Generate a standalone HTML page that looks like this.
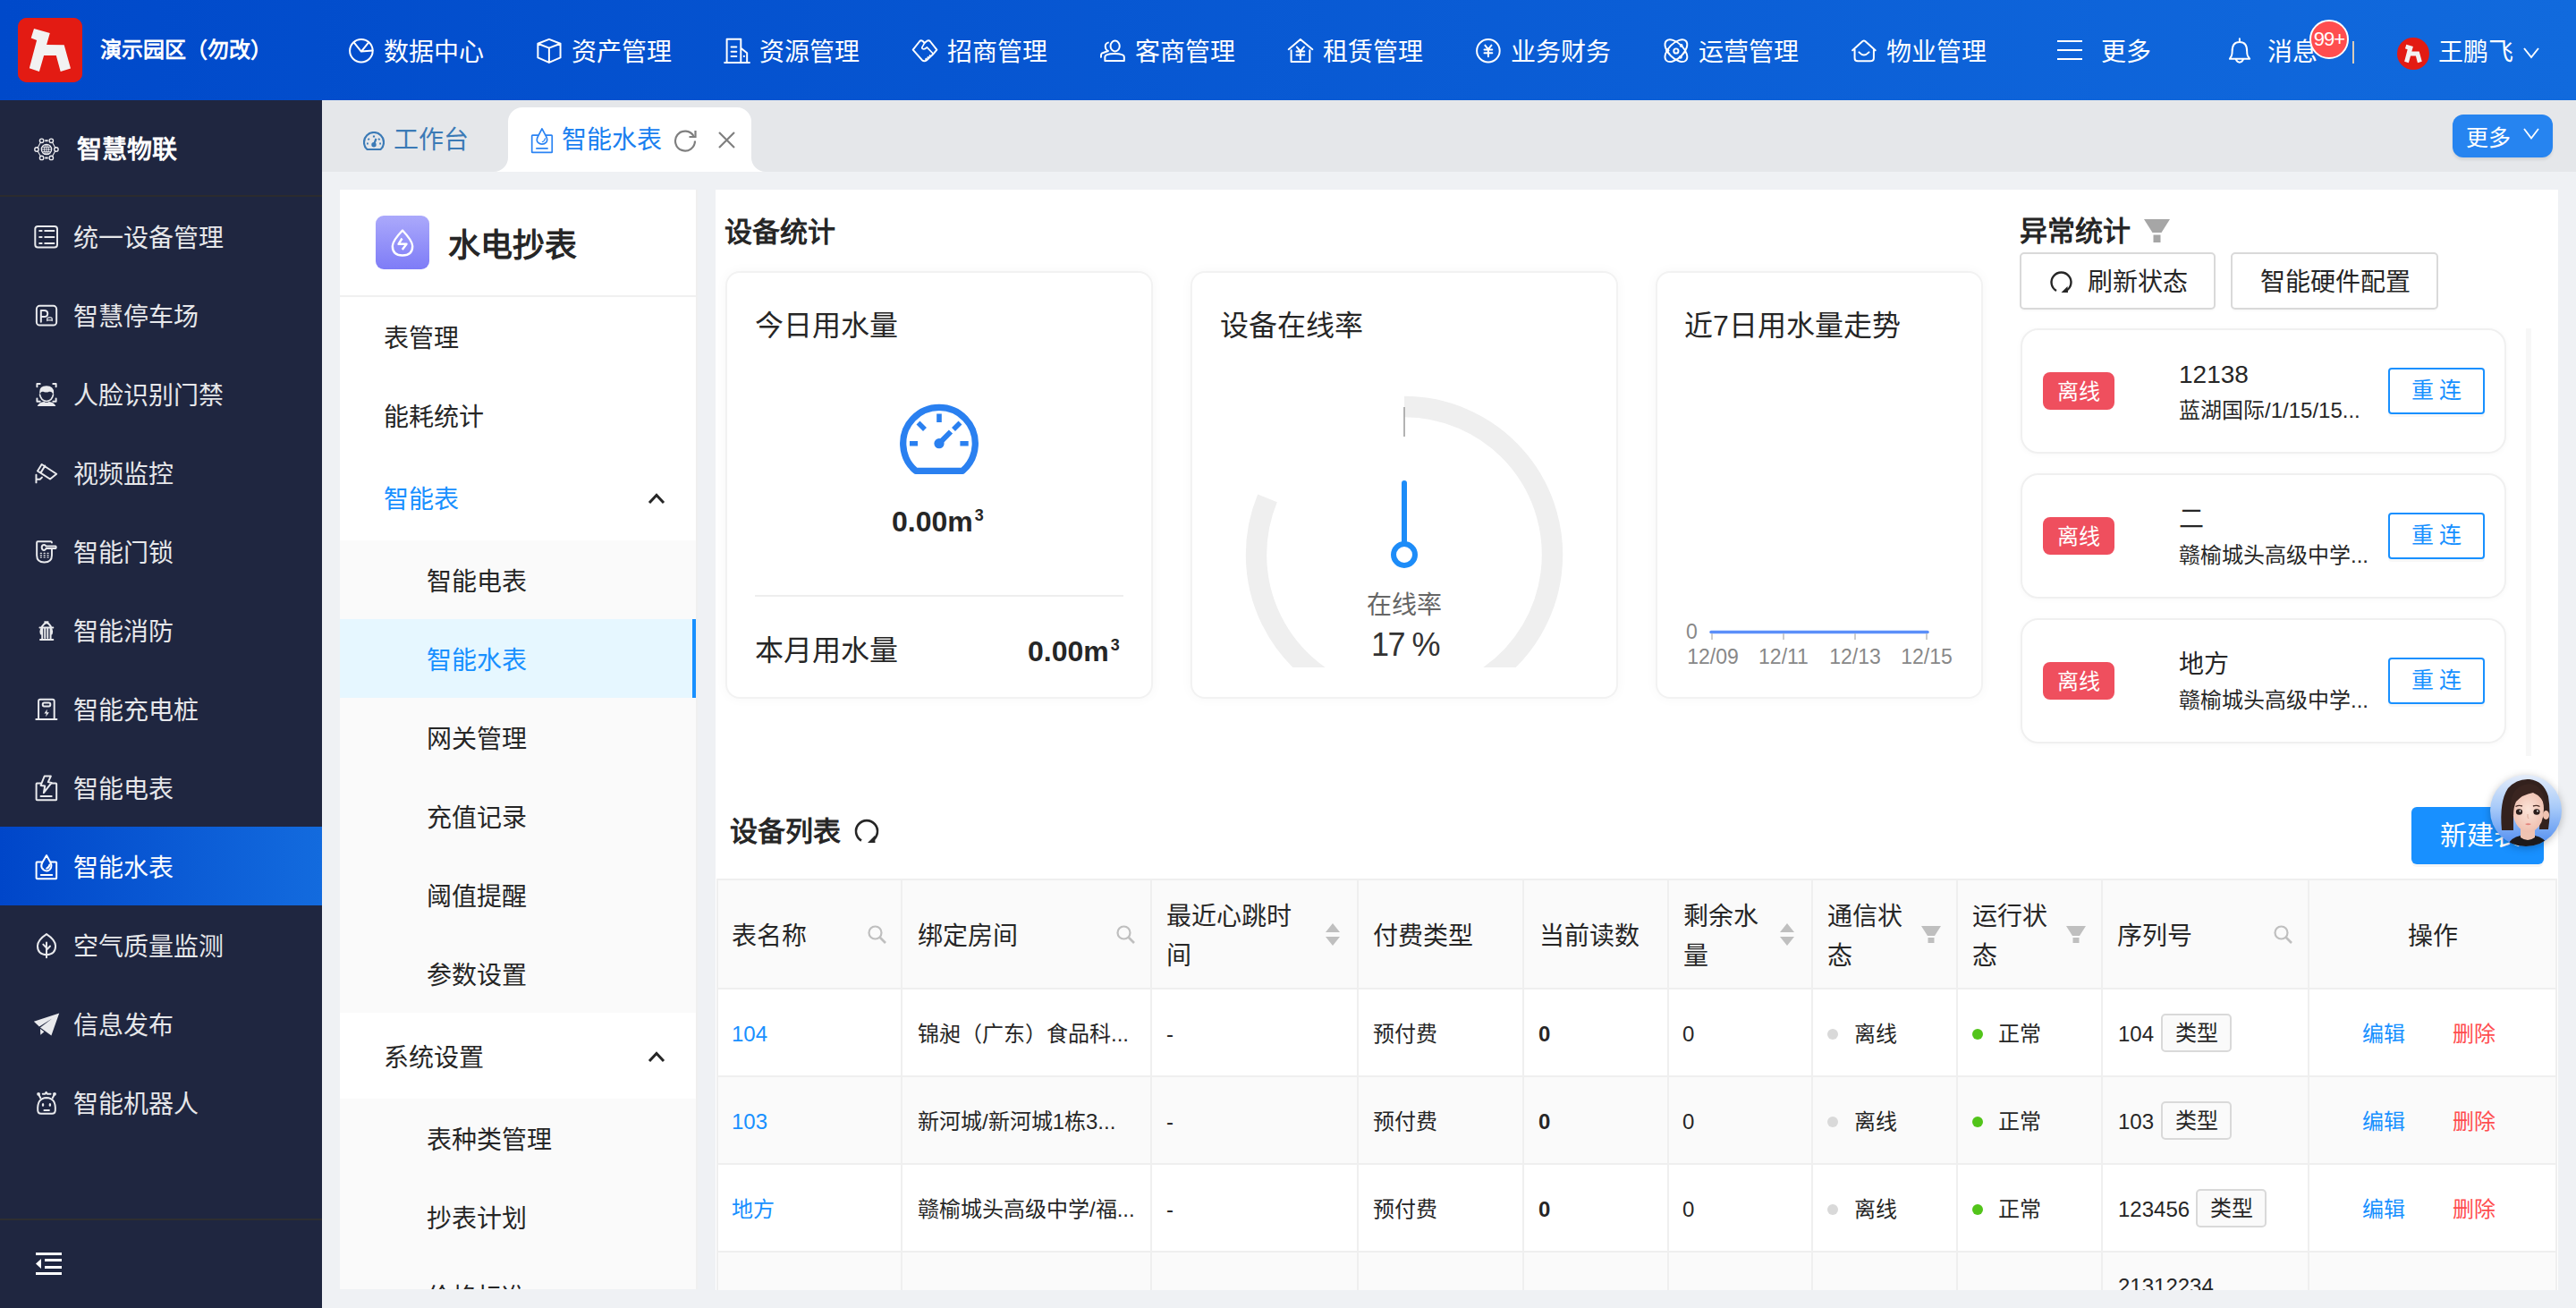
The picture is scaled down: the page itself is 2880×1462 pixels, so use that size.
<!DOCTYPE html>
<html lang="zh-CN">
<head>
<meta charset="utf-8">
<style>
*{box-sizing:border-box;margin:0;padding:0}
html,body{width:2880px;height:1462px;overflow:hidden}
body{position:relative;background:#eff1f4;font-family:"Liberation Sans",sans-serif;color:#262626}
.abs{position:absolute}
/* header */
#hdr{left:0;top:0;width:2880px;height:112px;background:linear-gradient(90deg,#0049ca 0%,#116add 100%);color:#fff}
#logo{left:20px;top:20px;width:72px;height:72px;border-radius:10px;background:#e31d1a}
#brand{left:112px;top:0;height:112px;line-height:112px;font-size:24px;font-weight:bold}
.nav{top:0;height:112px;display:flex;align-items:center;font-size:28px;color:#fff}
.nav svg{width:28px;height:28px;margin-right:11px;flex:none}
#badge{left:2582px;top:22px;width:44px;height:44px;border-radius:22px;background:#ff4d4f;border:2px solid #fff;color:#fff;font-size:22px;line-height:40px;text-align:center;letter-spacing:-1px}
/* sidebar */
#side{left:0;top:112px;width:360px;height:1350px;background:#1f2640;color:#e8e9ec}
.si{position:absolute;left:0;width:360px;height:88px;display:flex;align-items:center;font-size:28px}
.si svg{position:absolute;left:38px;width:26px;height:26px}
.si span{position:absolute;left:82px}
/* tabs */
#tabs{left:360px;top:112px;width:2520px;height:80px;background:#e5e7ea}
/* panels */
#lp{left:380px;top:212px;width:398px;height:1229px;background:#fff;overflow:hidden}
#more{left:2382px;top:16px;width:112px;height:48px;border-radius:12px;background:#2684f0;box-shadow:0 3px 3px rgba(0,0,0,0.08);color:#fff;font-size:25px;display:flex;align-items:center;padding-left:15px}
#rp{left:800px;top:212px;width:2060px;height:1230px;background:#fff}
@media (max-width:2000px){html{zoom:0.5}}
</style>
</head>
<body>
<div id="hdr" class="abs">
  <svg id="logo" class="abs" viewBox="0 0 72 72" width="72" height="72"><rect width="72" height="72" rx="7" fill="#e31b13"/><polygon points="18,11.9 35.8,17.1 32.1,30 51.7,30.3 59,56.6 47.7,59.9 42.8,41.9 29.1,41.9 23.9,59.9 12.8,56.3 21.1,25.1 14.7,22.6" fill="#f2f2f2"/></svg>
  <div id="brand" class="abs">演示园区（勿改）</div>
<div class="nav abs" style="left:390px"><svg viewBox="145.3 145.3 1017.3 1017.3" style="overflow:visible"><g fill="none" stroke="#fff" stroke-width="72" stroke-linecap="round" stroke-linejoin="round"><circle cx="650" cy="682" r="465"/><path d="M350 340 L650 710 L950 340 M650 710 L1110 670"/></g></svg><span>数据中心</span></div>
<div class="nav abs" style="left:600px"><svg viewBox="145.3 145.3 1017.3 1017.3" style="overflow:visible"><g fill="none" stroke="#fff" stroke-width="72" stroke-linecap="round" stroke-linejoin="round"><path d="M650 215 L1110 390 L1110 960 L650 1160 L195 960 L195 390 Z M195 390 L650 570 L1110 390 M650 570 L650 1160"/></g></svg><span>资产管理</span></div>
<div class="nav abs" style="left:810px"><svg viewBox="145.3 145.3 1017.3 1017.3" style="overflow:visible"><g fill="none" stroke="#fff" stroke-width="72" stroke-linecap="round" stroke-linejoin="round"><path d="M150 1165 L1160 1165 M240 1165 L240 210 L810 210 L810 1165 M810 570 L1060 770 L1060 1165 M420 530 L630 530 M420 720 L630 720 M420 905 L630 905"/></g><circle cx="940" cy="905" r="40" fill="#fff"/></svg><span>资源管理</span></div>
<div class="nav abs" style="left:1020px"><svg viewBox="145.3 145.3 1017.3 1017.3" style="overflow:visible"><g fill="none" stroke="#fff" stroke-width="72" stroke-linecap="round" stroke-linejoin="round"><path d="M170 640 L440 300 Q495 240 560 285 L640 360 L730 290 Q810 235 870 300 L1140 640 L980 830 L720 1070 Q630 1130 540 1060 Z"/><path d="M640 370 L540 540 Q520 590 590 610 Q660 620 740 540 L990 800 M690 1040 L700 1000 M770 975 L780 935 M850 910 L860 870" stroke-width="60"/></g></svg><span>招商管理</span></div>
<div class="nav abs" style="left:1230px"><svg viewBox="145.3 145.3 1017.3 1017.3" style="overflow:visible"><g fill="none" stroke="#fff" stroke-width="72" stroke-linecap="round" stroke-linejoin="round"><ellipse cx="750" cy="490" rx="185" ry="215"/><path d="M340 1090 L340 930 Q340 800 730 800 Q1120 800 1120 930 L1120 1090 Z"/><path d="M470 350 Q350 380 355 520 Q360 640 470 690 L220 780 Q175 800 180 940"/></g></svg><span>客商管理</span></div>
<div class="nav abs" style="left:1440px"><svg viewBox="145.3 145.3 1017.3 1017.3" style="overflow:visible"><g fill="none" stroke="#fff" stroke-width="72" stroke-linecap="round" stroke-linejoin="round"><path d="M170 625 L650 215 L1140 625 M275 660 L275 1130 L1030 1130 L1030 660 M500 525 L650 700 L800 525 M650 700 L650 1030 M490 705 L810 705 M490 855 L810 855"/></g></svg><span>租赁管理</span></div>
<div class="nav abs" style="left:1650px"><svg viewBox="145.3 145.3 1017.3 1017.3" style="overflow:visible"><g fill="none" stroke="#fff" stroke-width="72" stroke-linecap="round" stroke-linejoin="round"><circle cx="650" cy="682" r="465"/><path d="M520 460 L650 620 L780 460 M650 620 L650 920 M490 635 L810 635 M490 775 L810 775"/></g></svg><span>业务财务</span></div>
<div class="nav abs" style="left:1860px"><svg viewBox="145.3 145.3 1017.3 1017.3" style="overflow:visible"><g fill="none" stroke="#fff" stroke-width="72" stroke-linecap="round" stroke-linejoin="round" stroke-width="65"><ellipse cx="650" cy="680" rx="560" ry="300" transform="rotate(45 650 680)"/><ellipse cx="650" cy="680" rx="560" ry="300" transform="rotate(-45 650 680)"/><circle cx="650" cy="690" r="95"/></g><g fill="#fff"><circle cx="300" cy="660" r="75"/><circle cx="860" cy="470" r="70"/><circle cx="830" cy="940" r="70"/></g></svg><span>运营管理</span></div>
<div class="nav abs" style="left:2070px"><svg viewBox="145.3 145.3 1017.3 1017.3" style="overflow:visible"><g fill="none" stroke="#fff" stroke-width="72" stroke-linecap="round" stroke-linejoin="round"><path d="M185 665 L600 290 Q650 250 700 290 L1115 665 M275 620 L275 980 Q275 1100 400 1100 L900 1100 Q1050 1100 1050 980 L1050 620 M450 740 Q650 960 855 740"/></g></svg><span>物业管理</span></div>
  <div class="nav abs" style="left:2300px"><svg viewBox="0 0 28 28" fill="none" stroke="#fff" stroke-width="2.2"><path d="M0 4 L28 4 M0 14 L28 14 M0 24 L28 24"/></svg><span style="margin-left:10px">更多</span></div>
  <div class="nav abs" style="left:2491px"><svg viewBox="181.7 145.3 944.6 1017.3" style="width:26px;overflow:visible"><g fill="none" stroke="#fff" stroke-width="72" stroke-linecap="round" stroke-linejoin="round" stroke-width="78"><path d="M650 190 L650 300 M250 1010 L1060 1010 L975 880 Q950 820 950 700 Q950 330 650 330 Q350 330 350 700 Q350 820 325 880 Z M500 1030 Q560 1150 650 1150 Q740 1150 800 1030"/></g></svg><span style="margin-left:7px">消息</span></div>
  <div class="abs" id="badge">99+</div>
  <div class="abs" style="left:2630px;top:46px;width:2px;height:25px;background:#d8cbb8"></div>
  <svg class="abs" style="left:2680px;top:42px" width="36" height="36" viewBox="0 0 72 72"><circle cx="36" cy="36" r="36" fill="#e31b13"/><g transform="translate(36 36) scale(0.85) translate(-36 -36)"><polygon points="18,11.9 35.8,17.1 32.1,30 51.7,30.3 59,56.6 47.7,59.9 42.8,41.9 29.1,41.9 23.9,59.9 12.8,56.3 21.1,25.1 14.7,22.6" fill="#f2f2f2"/></g></svg>
  <div class="nav abs" style="left:2726px">王鹏飞</div>
  <svg class="abs" style="left:2821px;top:53px" width="18" height="13" viewBox="0 0 18 13" fill="none" stroke="#fff" stroke-width="2"><path d="M1 1 L9 11 L17 1"/></svg>
</div>
<div id="side" class="abs">
<svg class="abs" style="left:34px;top:37px" width="36" height="36" viewBox="0 0 1308 1308"><g fill="none" stroke="#ededf0" stroke-linecap="round" stroke-width="50"><circle cx="458" cy="302" r="80"/><circle cx="847" cy="302" r="80"/><circle cx="254" cy="654" r="80"/><circle cx="1050" cy="654" r="80"/><circle cx="458" cy="996" r="80"/><circle cx="847" cy="996" r="80"/><path d="M410 370 L300 580 M895 370 L1005 580 M300 728 L410 930 M1005 728 L895 930" stroke-width="40"/><path d="M590 302 L715 302 M590 996 L715 996" stroke-width="70" stroke-linecap="butt"/><circle cx="654" cy="654" r="205" stroke-width="50"/><path d="M654 460 L654 850 M465 654 L845 654 M500 560 L808 560 M500 750 L808 750" stroke-width="32"/><ellipse cx="654" cy="654" rx="90" ry="195" stroke-width="32"/></g></svg><div class="abs" style="left:86px;top:31px;height:50px;line-height:50px;font-size:28px;font-weight:bold;color:#fff">智慧物联</div>
<div class="abs" style="left:0;top:106px;width:360px;height:2px;background:#2b2b2e"></div>
<div class="abs" style="left:0;top:108px;width:360px;height:88px;"></div><svg class="abs" style="left:34px;top:134px" width="36" height="36" viewBox="0 0 1308 1308"><g fill="none" stroke="#e9eaed" stroke-width="72" stroke-linecap="round" stroke-linejoin="round"><rect x="193" y="254" width="897" height="858" rx="110"/><path d="M370 436 L460 436 M590 436 L960 436 M370 690 L460 690 M590 690 L960 690 M370 944 L460 944 M590 944 L960 944"/></g></svg><div class="abs" style="left:82px;top:111px;height:88px;line-height:88px;font-size:28px;color:#e6e7ea">统一设备管理</div>
<div class="abs" style="left:0;top:196px;width:360px;height:88px;"></div><svg class="abs" style="left:34px;top:218px" width="36" height="36" viewBox="0 0 1308 1308"><g fill="none" stroke="#e9eaed" stroke-width="72" stroke-linecap="round" stroke-linejoin="round"><rect x="250" y="430" width="810" height="790" rx="130"/><path d="M430 1080 L430 615 L560 615 Q700 615 700 745 Q700 875 560 875 L470 875"/><path d="M680 1040 L680 950 Q690 900 760 900 L820 900 Q870 900 880 950 L880 1040 M700 1010 L860 1010" stroke-width="45"/></g></svg><div class="abs" style="left:82px;top:199px;height:88px;line-height:88px;font-size:28px;color:#e6e7ea">智慧停车场</div>
<div class="abs" style="left:0;top:284px;width:360px;height:88px;"></div><svg class="abs" style="left:34px;top:306px" width="36" height="36" viewBox="0 0 1308 1308"><g fill="none" stroke="#e9eaed" stroke-width="72" stroke-linecap="round" stroke-linejoin="round"><path d="M270 520 L270 400 L390 400 M920 400 L1040 400 L1040 520 M270 1000 L270 1120 L390 1120 M920 1120 L1040 1120 L1040 1000"/></g><path fill="#e9eaed" d="M370 740 Q360 480 654 480 Q950 480 950 760 L920 860 Q900 700 760 720 Q700 760 654 740 Q600 760 520 720 Q400 700 390 860 Z"/><path d="M380 820 Q420 1080 654 1110 Q890 1080 930 820" fill="none" stroke="#e9eaed" stroke-width="60"/><path fill="#e9eaed" d="M280 1308 Q350 1150 560 1130 Q654 1200 750 1130 Q960 1150 1030 1308 Z"/></svg><div class="abs" style="left:82px;top:287px;height:88px;line-height:88px;font-size:28px;color:#e6e7ea">人脸识别门禁</div>
<div class="abs" style="left:0;top:372px;width:360px;height:88px;"></div><svg class="abs" style="left:34px;top:396px" width="36" height="36" viewBox="0 0 1308 1308"><g fill="none" stroke="#e9eaed" stroke-width="72" stroke-linecap="round" stroke-linejoin="round"><path d="M290 670 L460 400 L1060 790 L800 1000 Z M420 740 L590 460 M235 830 L235 1140 M235 1010 L390 1010 L470 930"/></g></svg><div class="abs" style="left:82px;top:375px;height:88px;line-height:88px;font-size:28px;color:#e6e7ea">视频监控</div>
<div class="abs" style="left:0;top:460px;width:360px;height:88px;"></div><svg class="abs" style="left:34px;top:484px" width="36" height="36" viewBox="0 0 1308 1308"><g fill="none" stroke="#e9eaed" stroke-width="72" stroke-linecap="round" stroke-linejoin="round" stroke-width="60"><path d="M870 380 Q870 340 820 340 L300 340 Q260 340 260 380 L260 900 Q260 1180 565 1180 Q870 1180 870 900 L870 650"/><path d="M640 530 Q600 470 560 470 Q460 470 460 575 Q460 690 560 690 Q600 690 640 620 L1030 620 Q1060 575 1030 530 Z"/></g><g fill="#e9eaed"><rect x="390" y="790" width="80" height="50" rx="20"/><rect x="530" y="790" width="80" height="50" rx="20"/><rect x="670" y="790" width="80" height="50" rx="20"/><rect x="390" y="870" width="80" height="50" rx="20"/><rect x="530" y="870" width="80" height="50" rx="20"/><rect x="670" y="870" width="80" height="50" rx="20"/><rect x="390" y="950" width="80" height="50" rx="20"/><rect x="530" y="950" width="80" height="50" rx="20"/><rect x="670" y="950" width="80" height="50" rx="20"/></g></svg><div class="abs" style="left:82px;top:463px;height:88px;line-height:88px;font-size:28px;color:#e6e7ea">智能门锁</div>
<div class="abs" style="left:0;top:548px;width:360px;height:88px;"></div><svg class="abs" style="left:34px;top:574px" width="36" height="36" viewBox="0 0 1308 1308"><g fill="none" stroke="#e9eaed" stroke-width="72" stroke-linecap="round" stroke-linejoin="round" stroke-width="55"><path d="M380 560 L920 560 M400 1050 L920 1050 M480 560 L480 1050 M820 560 L820 1050 M470 520 Q560 380 654 360 Q750 380 830 520 M480 640 L430 640 Q400 700 430 820 L480 820 M820 640 L860 640 Q890 700 860 820 L820 820 M590 620 L590 980 M700 620 L700 980"/></g><rect x="560" y="300" width="180" height="90" fill="#e9eaed"/></svg><div class="abs" style="left:82px;top:551px;height:88px;line-height:88px;font-size:28px;color:#e6e7ea">智能消防</div>
<div class="abs" style="left:0;top:636px;width:360px;height:88px;"></div><svg class="abs" style="left:34px;top:662px" width="36" height="36" viewBox="0 0 1308 1308"><g fill="none" stroke="#e9eaed" stroke-width="72" stroke-linecap="round" stroke-linejoin="round" stroke-width="60"><path d="M330 1090 L330 350 Q330 280 400 280 L900 280 Q970 280 970 350 L970 1090 M230 1090 L1070 1090"/><rect x="500" y="420" width="310" height="140" rx="60"/></g><path fill="#e9eaed" d="M680 680 L560 850 L650 850 L620 990 L760 810 L670 810 Z"/></svg><div class="abs" style="left:82px;top:639px;height:88px;line-height:88px;font-size:28px;color:#e6e7ea">智能充电桩</div>
<div class="abs" style="left:0;top:724px;width:360px;height:88px;"></div><svg class="abs" style="left:34px;top:750px" width="36" height="36" viewBox="0 0 1308 1308"><g fill="none" stroke="#e9eaed" stroke-width="72" stroke-linecap="round" stroke-linejoin="round" stroke-width="60"><path d="M420 490 L260 490 Q240 490 240 520 L240 1140 Q240 1170 280 1170 L1040 1170 Q1060 1170 1060 1140 L1060 520 Q1060 490 1030 490 L860 490"/><path d="M570 200 L830 200 L720 440 L860 470 L540 880 L590 600 L420 580 Z"/><path d="M420 1020 L860 1020"/></g></svg><div class="abs" style="left:82px;top:727px;height:88px;line-height:88px;font-size:28px;color:#e6e7ea">智能电表</div>
<div class="abs" style="left:0;top:812px;width:360px;height:88px;background:linear-gradient(90deg,#0046c9,#136bde);"></div><svg class="abs" style="left:34px;top:838px" width="36" height="36" viewBox="0 0 1308 1308"><g fill="none" stroke="#ffffff" stroke-width="72" stroke-linecap="round" stroke-linejoin="round" stroke-width="55"><path d="M470 490 L260 490 Q240 490 240 520 L240 1140 Q240 1170 280 1170 L1040 1170 Q1060 1170 1060 1140 L1060 520 Q1060 490 1030 490 L830 490"/><path d="M654 220 L480 520 Q420 640 460 720 Q530 850 654 850 Q780 850 840 720 Q880 640 820 520 Z"/><path d="M780 600 Q760 720 660 750"/><path d="M430 1020 L880 1020"/></g></svg><div class="abs" style="left:82px;top:815px;height:88px;line-height:88px;font-size:28px;color:#fff">智能水表</div>
<div class="abs" style="left:0;top:900px;width:360px;height:88px;"></div><svg class="abs" style="left:34px;top:926px" width="36" height="36" viewBox="0 0 1308 1308"><g fill="none" stroke="#e9eaed" stroke-width="72" stroke-linecap="round" stroke-linejoin="round" stroke-width="65"><path d="M654 220 Q290 460 290 700 Q290 1050 654 1060 Q1020 1050 1020 700 Q1020 460 654 220 Z"/><path d="M654 560 L654 1170 M520 640 L654 780 M800 710 L680 840"/></g></svg><div class="abs" style="left:82px;top:903px;height:88px;line-height:88px;font-size:28px;color:#e6e7ea">空气质量监测</div>
<div class="abs" style="left:0;top:988px;width:360px;height:88px;"></div><svg class="abs" style="left:34px;top:1014px" width="36" height="36" viewBox="0 0 1308 1308"><path fill="#e9eaed" d="M140 570 L1170 240 L850 1140 L400 820 L880 450 L360 780 Z M400 870 L560 990 L410 1120 Z"/></svg><div class="abs" style="left:82px;top:991px;height:88px;line-height:88px;font-size:28px;color:#e6e7ea">信息发布</div>
<div class="abs" style="left:0;top:1076px;width:360px;height:88px;"></div><svg class="abs" style="left:34px;top:1102px" width="36" height="36" viewBox="0 0 1308 1308"><g fill="none" stroke="#e9eaed" stroke-width="72" stroke-linecap="round" stroke-linejoin="round" stroke-width="70"><path d="M300 1000 Q260 480 654 470 Q1050 480 1010 1000 Q1000 1120 880 1120 L430 1120 Q310 1120 300 1000 Z"/><path d="M410 480 L330 330 M900 480 L980 330 M500 320 L590 320 L640 250 L690 320 L820 320 M560 980 L760 980"/></g><circle cx="330" cy="320" r="70" fill="#e9eaed"/><circle cx="980" cy="320" r="70" fill="#e9eaed"/><ellipse cx="510" cy="760" rx="45" ry="70" fill="#e9eaed"/><ellipse cx="795" cy="760" rx="45" ry="70" fill="#e9eaed"/></svg><div class="abs" style="left:82px;top:1079px;height:88px;line-height:88px;font-size:28px;color:#e6e7ea">智能机器人</div>
<div class="abs" style="left:0;top:1250px;width:360px;height:2px;background:#2e2e30"></div>
<svg class="abs" style="left:39px;top:1288px" width="30" height="26" viewBox="0 0 30 26"><g fill="#fff"><rect x="1" y="0" width="29" height="3"/><rect x="11" y="7" width="19" height="3"/><rect x="11" y="15" width="19" height="3"/><rect x="1" y="22" width="29" height="3"/><path d="M1 12.5 L7 7 L7 18 Z"/></g></svg>
</div>
<div id="tabs" class="abs">
  <svg class="abs" style="left:46px;top:35px" width="24" height="21" viewBox="0 0 24 21" fill="none" stroke="#3b7ab6" stroke-width="2.2"><path d="M4.5 20 L19.5 20 Q23 17 23 12 A11 11 0 0 0 1 12 Q1 17 4.5 20 Z"/><path d="M12 4.5 L12 6.5 M5.5 8 L6.8 9.2 M18.5 8 L17.2 9.2 M4 13.5 L5.8 13.5 M20 13.5 L18.2 13.5 M12 14.5 L14.5 8"/><circle cx="12" cy="14.8" r="1.6" fill="#3b7ab6"/></svg>
  <div class="abs" style="left:80px;top:5px;height:80px;line-height:80px;font-size:28px;color:#3b7ab6">工作台</div>
  <div class="abs" style="left:208px;top:8px;width:272px;height:72px;background:#fff;border-radius:16px 16px 0 0"></div>
  <svg class="abs" style="left:192px;top:64px" width="16" height="16" viewBox="0 0 16 16"><path d="M16 0 L16 16 L0 16 A16 16 0 0 0 16 0 Z" fill="#fff"/></svg>
  <svg class="abs" style="left:480px;top:64px" width="16" height="16" viewBox="0 0 16 16"><path d="M0 0 L0 16 L16 16 A16 16 0 0 1 0 0 Z" fill="#fff"/></svg>
  <svg class="abs" style="left:230px;top:26px" width="36" height="36" viewBox="0 0 1308 1308"><g fill="none" stroke="#2a83f3" stroke-width="62" stroke-linecap="round" stroke-linejoin="round"><path d="M410 480 L200 480 Q170 480 170 510 L170 1150 Q170 1175 200 1175 L960 1175 Q990 1175 990 1150 L990 510 Q990 480 960 480 L750 480"/><path d="M580 210 L400 560 Q340 700 420 780 Q490 840 580 840 Q680 840 750 770 Q820 690 760 550 Z"/><path d="M705 610 Q690 720 595 745" stroke-width="45"/><path d="M360 1015 L800 1015"/></g></svg>
  <div class="abs" style="left:268px;top:5px;height:80px;line-height:80px;font-size:28px;color:#1a7ff0">智能水表</div>
  <svg class="abs" style="left:393px;top:32px" width="27" height="26" viewBox="0 0 27 26" fill="none" stroke="#7f7f7f" stroke-width="2.2"><path d="M22.5 8 A11 11 0 1 0 24 13.5"/><path d="M24.5 2 L24.5 9 L17.5 9" stroke-linejoin="miter"/></svg>
  <svg class="abs" style="left:443px;top:35px" width="19" height="19" viewBox="0 0 19 19" fill="none" stroke="#7f7f7f" stroke-width="2.2"><path d="M1 1 L18 18 M18 1 L1 18"/></svg>
  <div class="abs" id="more">更多<svg width="18" height="13" viewBox="0 0 18 13" fill="none" stroke="#fff" stroke-width="1.8" style="margin-left:14px;position:relative;top:-3px"><path d="M1 1 L9 11.5 L17 1"/></svg></div>
</div>
<div id="lp" class="abs">
  <div class="abs" style="left:40px;top:29px;width:60px;height:60px;border-radius:9px;background:linear-gradient(180deg,#aba9fb,#7e7cf7)"></div>
  <svg class="abs" style="left:40px;top:29px" width="60" height="60" viewBox="0 0 60 60" fill="none" stroke="#fff" stroke-width="2.4" stroke-linejoin="round"><path d="M30 16.5 Q19 28 18.8 34 Q18.8 44.5 30 44.5 Q41.2 44.5 41.2 34 Q41 28 30 16.5 Z"/><path d="M29.5 25.5 L25.5 31.8 L34.5 31.8 L29.8 38"/></svg>
  <div class="abs" style="left:121px;top:33px;height:60px;line-height:60px;font-size:36px;font-weight:bold;color:#262626">水电抄表</div>
  <div class="abs" style="left:0;top:118px;width:398px;height:2px;background:#f0f0f0"></div>
  <div class="abs" style="left:49px;top:123px;height:88px;line-height:88px;font-size:28px;color:#262626">表管理</div>
<div class="abs" style="left:49px;top:211px;height:88px;line-height:88px;font-size:28px;color:#262626">能耗统计</div>
<div class="abs" style="left:49px;top:299px;height:96px;line-height:96px;font-size:28px;color:#1890ff">智能表</div><svg class="abs" style="left:344px;top:339px" width="20" height="13" viewBox="0 0 20 13" fill="none" stroke="#262626" stroke-width="3"><path d="M2 11 L10 2.5 L18 11"/></svg>
<div class="abs" style="left:0;top:392px;width:398px;height:528px;background:#fafafa"></div>
<div class="abs" style="left:97px;top:395px;height:88px;line-height:88px;font-size:28px;color:#262626">智能电表</div>
<div class="abs" style="left:0;top:480px;width:398px;height:88px;background:#e6f7ff"></div><div class="abs" style="left:394px;top:480px;width:4px;height:88px;background:#1890ff"></div><div class="abs" style="left:97px;top:483px;height:88px;line-height:88px;font-size:28px;color:#1890ff">智能水表</div>
<div class="abs" style="left:97px;top:571px;height:88px;line-height:88px;font-size:28px;color:#262626">网关管理</div>
<div class="abs" style="left:97px;top:659px;height:88px;line-height:88px;font-size:28px;color:#262626">充值记录</div>
<div class="abs" style="left:97px;top:747px;height:88px;line-height:88px;font-size:28px;color:#262626">阈值提醒</div>
<div class="abs" style="left:97px;top:835px;height:88px;line-height:88px;font-size:28px;color:#262626">参数设置</div>
<div class="abs" style="left:49px;top:923px;height:96px;line-height:96px;font-size:28px;color:#262626">系统设置</div><svg class="abs" style="left:344px;top:963px" width="20" height="13" viewBox="0 0 20 13" fill="none" stroke="#262626" stroke-width="3"><path d="M2 11 L10 2.5 L18 11"/></svg>
<div class="abs" style="left:0;top:1016px;width:398px;height:400px;background:#fafafa"></div>
<div class="abs" style="left:97px;top:1019px;height:88px;line-height:88px;font-size:28px;color:#262626">表种类管理</div>
<div class="abs" style="left:97px;top:1107px;height:88px;line-height:88px;font-size:28px;color:#262626">抄表计划</div>
<div class="abs" style="left:97px;top:1195px;height:88px;line-height:88px;font-size:28px;color:#262626">价格标准</div>

</div><div class="abs" style="left:778px;top:212px;width:2px;height:1229px;background:#efefef"></div>
<div id="rp" class="abs">
<div class="abs" style="left:10px;top:23.0px;height:50px;line-height:50px;font-size:31px;color:#262626;font-weight:bold;white-space:nowrap;">设备统计</div>
<div class="abs" style="left:11px;top:91px;width:478px;height:478px;background:#fff;border:2px solid #f2f2f2;border-radius:16px;box-shadow:0 0 14px rgba(0,0,0,0.035)"></div>
<div class="abs" style="left:44px;top:127.0px;height:50px;line-height:50px;font-size:32px;color:#262626;font-weight:normal;white-space:nowrap;">今日用水量</div>
<svg class="abs" style="left:202px;top:236px;" width="96" height="86" viewBox="-4 -4 96 86"><path d="M17.8 74.3 L70.2 74.3 A40.3 40.3 0 1 0 17.8 74.3 Z" fill="none" stroke="#2a80f0" stroke-width="7.3" stroke-linejoin="round"/><g stroke="#2a80f0" stroke-width="5.6"><path d="M44 10.6 L44 20 M20.5 20.5 L28 28 M67.5 20.5 L60 28 M11 43.7 L20 43.7 M67.4 43.7 L76.7 43.7"/><path d="M44 43.7 L57 30.5" stroke-width="6"/></g><circle cx="44" cy="43.7" r="5.6" fill="#2a80f0"/></svg>
<div class="abs" style="left:197px;top:339.0px;height:50px;line-height:50px;font-size:32px;color:#262626;font-weight:bold;white-space:nowrap;">0.00m<sup style="font-size:18px;vertical-align:12px;margin-left:2px">3</sup></div>
<div class="abs" style="left:44px;top:453px;width:412px;height:2px;background:#eeeeee"></div>
<div class="abs" style="left:44px;top:490.0px;height:50px;line-height:50px;font-size:32px;color:#262626;font-weight:normal;white-space:nowrap;">本月用水量</div>
<div class="abs" style="left:349px;top:484.0px;height:50px;line-height:50px;font-size:32px;color:#262626;font-weight:bold;white-space:nowrap;">0.00m<sup style="font-size:18px;vertical-align:12px;margin-left:2px">3</sup></div>
<div class="abs" style="left:531px;top:91px;width:478px;height:478px;background:#fff;border:2px solid #f2f2f2;border-radius:16px;box-shadow:0 0 14px rgba(0,0,0,0.035)"></div>
<div class="abs" style="left:564px;top:127.0px;height:50px;line-height:50px;font-size:32px;color:#262626;font-weight:normal;white-space:nowrap;">设备在线率</div>
<svg class="abs" style="left:531px;top:91px" width="478" height="443" viewBox="0 0 478 443"><path d="M239.0 151.5 A165.5 165.5 0 1 1 86.0 253.9" fill="none" stroke="#efefef" stroke-width="23.4"/><line x1="239" y1="152" x2="239" y2="185" stroke="#9a9a9a" stroke-width="1.5"/><line x1="239" y1="237" x2="239" y2="302" stroke="#1d8cf8" stroke-width="6" stroke-linecap="round"/><circle cx="239" cy="317" r="12" fill="#fff" stroke="#1d8cf8" stroke-width="6"/></svg>
<div class="abs" style="left:728px;top:440.0px;height:50px;line-height:50px;font-size:28px;color:#666666;font-weight:normal;white-space:nowrap;">在线率</div>
<div class="abs" style="left:733px;top:484.0px;height:50px;line-height:50px;font-size:36px;color:#333333;font-weight:normal;white-space:nowrap;letter-spacing:-1.5px">17 %</div>
<div class="abs" style="left:1051px;top:91px;width:366px;height:478px;background:#fff;border:2px solid #f2f2f2;border-radius:16px;box-shadow:0 0 14px rgba(0,0,0,0.035)"></div>
<div class="abs" style="left:1083px;top:127.0px;height:50px;line-height:50px;font-size:32px;color:#262626;font-weight:normal;white-space:nowrap;">近7日用水量走势</div>
<svg class="abs" style="left:0;top:0" width="2060" height="1230" viewBox="800 212 2060 1230"><line x1="1913" y1="706.5" x2="2155" y2="706.5" stroke="#5b8ff9" stroke-width="3.5" stroke-linecap="round"/><line x1="1914" y1="708" x2="1914" y2="715" stroke="#cccccc" stroke-width="2"/><line x1="1994" y1="708" x2="1994" y2="715" stroke="#cccccc" stroke-width="2"/><line x1="2074" y1="708" x2="2074" y2="715" stroke="#cccccc" stroke-width="2"/><line x1="2154" y1="708" x2="2154" y2="715" stroke="#cccccc" stroke-width="2"/></svg>
<div class="abs" style="left:1085px;top:469.0px;height:50px;line-height:50px;font-size:23px;color:#888888;font-weight:normal;white-space:nowrap;">0</div>
<div class="abs" style="left:1065px;top:497px;width:100px;height:50px;line-height:50px;text-align:center;font-size:23px;color:#888888">12/09</div>
<div class="abs" style="left:1144px;top:497px;width:100px;height:50px;line-height:50px;text-align:center;font-size:23px;color:#888888">12/11</div>
<div class="abs" style="left:1224px;top:497px;width:100px;height:50px;line-height:50px;text-align:center;font-size:23px;color:#888888">12/13</div>
<div class="abs" style="left:1304px;top:497px;width:100px;height:50px;line-height:50px;text-align:center;font-size:23px;color:#888888">12/15</div>
<div class="abs" style="left:1458px;top:22.0px;height:50px;line-height:50px;font-size:31px;color:#262626;font-weight:bold;white-space:nowrap;">异常统计</div>
<svg class="abs" style="left:1597px;top:33px;" width="29" height="26" viewBox="0 0 29 26"><path d="M0 0 L29 0 L19.5 15 L9.5 15 Z M10.5 17.5 L18.5 17.5 L18.5 26 L10.5 26 Z" fill="#a6a6a6"/></svg>
<div class="abs" style="left:1458px;top:70px;width:219px;height:64px;background:#fff;border:2px solid #d9d9d9;border-radius:5px;box-shadow:0 2px 0 rgba(0,0,0,0.02)"></div>
<svg class="abs" style="left:1490px;top:90px;" width="28" height="26" viewBox="0 0 28 26"><path d="M9 23 A11 11 0 1 1 20 23" fill="none" stroke="#262626" stroke-width="2.4"/><path d="M14.5 25 L22 25 L21.5 18 Z" fill="#262626"/></svg>
<div class="abs" style="left:1534px;top:79.0px;height:50px;line-height:50px;font-size:28px;color:#262626;font-weight:normal;white-space:nowrap;">刷新状态</div>
<div class="abs" style="left:1694px;top:70px;width:232px;height:64px;background:#fff;border:2px solid #d9d9d9;border-radius:5px;box-shadow:0 2px 0 rgba(0,0,0,0.02)"></div>
<div class="abs" style="left:1727px;top:79.0px;height:50px;line-height:50px;font-size:28px;color:#262626;font-weight:normal;white-space:nowrap;">智能硬件配置</div>
<div class="abs" style="left:1459px;top:155px;width:543px;height:140px;background:#fff;border:2px solid #f0f0f0;border-radius:20px;box-shadow:0 1px 6px rgba(0,0,0,0.03)"></div>
<div class="abs" style="left:1484px;top:204px;width:80px;height:42px;background:#ef4f5e;border-radius:8px;color:#fff;font-size:24px;font-weight:500;text-align:center;line-height:44px">离线</div>
<div class="abs" style="left:1636px;top:182.0px;height:50px;line-height:50px;font-size:28px;color:#262626;font-weight:normal;white-space:nowrap;">12138</div>
<div class="abs" style="left:1636px;top:222.0px;height:50px;line-height:50px;font-size:24px;color:#262626;font-weight:normal;white-space:nowrap;">蓝湖国际/1/15/15...</div>
<div class="abs" style="left:1870px;top:199px;width:108px;height:52px;border:2px solid #1890ff;border-radius:4px;color:#1890ff;font-size:25px;text-align:center;line-height:47px;letter-spacing:6px;padding-left:6px;box-shadow:0 3px 0 rgba(0,0,0,0.03)">重连</div>
<div class="abs" style="left:1459px;top:317px;width:543px;height:140px;background:#fff;border:2px solid #f0f0f0;border-radius:20px;box-shadow:0 1px 6px rgba(0,0,0,0.03)"></div>
<div class="abs" style="left:1484px;top:366px;width:80px;height:42px;background:#ef4f5e;border-radius:8px;color:#fff;font-size:24px;font-weight:500;text-align:center;line-height:44px">离线</div>
<div class="abs" style="left:1636px;top:344.0px;height:50px;line-height:50px;font-size:28px;color:#262626;font-weight:normal;white-space:nowrap;">二</div>
<div class="abs" style="left:1636px;top:384.0px;height:50px;line-height:50px;font-size:24px;color:#262626;font-weight:normal;white-space:nowrap;">赣榆城头高级中学...</div>
<div class="abs" style="left:1870px;top:361px;width:108px;height:52px;border:2px solid #1890ff;border-radius:4px;color:#1890ff;font-size:25px;text-align:center;line-height:47px;letter-spacing:6px;padding-left:6px;box-shadow:0 3px 0 rgba(0,0,0,0.03)">重连</div>
<div class="abs" style="left:1459px;top:479px;width:543px;height:140px;background:#fff;border:2px solid #f0f0f0;border-radius:20px;box-shadow:0 1px 6px rgba(0,0,0,0.03)"></div>
<div class="abs" style="left:1484px;top:528px;width:80px;height:42px;background:#ef4f5e;border-radius:8px;color:#fff;font-size:24px;font-weight:500;text-align:center;line-height:44px">离线</div>
<div class="abs" style="left:1636px;top:506.0px;height:50px;line-height:50px;font-size:28px;color:#262626;font-weight:normal;white-space:nowrap;">地方</div>
<div class="abs" style="left:1636px;top:546.0px;height:50px;line-height:50px;font-size:24px;color:#262626;font-weight:normal;white-space:nowrap;">赣榆城头高级中学...</div>
<div class="abs" style="left:1870px;top:523px;width:108px;height:52px;border:2px solid #1890ff;border-radius:4px;color:#1890ff;font-size:25px;text-align:center;line-height:47px;letter-spacing:6px;padding-left:6px;box-shadow:0 3px 0 rgba(0,0,0,0.03)">重连</div>
<div class="abs" style="left:2024px;top:155px;width:6px;height:478px;background:#f7f7f7"></div>
<div class="abs" style="left:16px;top:693.0px;height:50px;line-height:50px;font-size:31px;color:#262626;font-weight:bold;white-space:nowrap;">设备列表</div>
<svg class="abs" style="left:154px;top:702px;" width="30" height="29" viewBox="0 0 30 29"><path d="M9 25.5 A12 12 0 1 1 21 25.5" fill="none" stroke="#262626" stroke-width="2.6"/><path d="M16 28 L24.5 28 L24 20 Z" fill="#262626"/></svg>
<div class="abs" style="left:1896px;top:690px;width:148px;height:64px;background:#1890ff;border-radius:6px;box-shadow:0 3px 0 rgba(0,0,0,0.04);color:#fff;font-size:30px;line-height:64px;padding-left:32px;white-space:nowrap">新建表</div>
<svg class="abs" style="left:1984px;top:654px;overflow:visible;filter:drop-shadow(0 2px 4px rgba(0,0,0,0.25))" width="80" height="80" viewBox="0 0 80 80"><defs><linearGradient id="avbg" x1="0" y1="0" x2="0" y2="1"><stop offset="0" stop-color="#e4ecf9"/><stop offset="0.45" stop-color="#a9cbf9"/><stop offset="1" stop-color="#4f8cf0"/></linearGradient><clipPath id="avc"><circle cx="40" cy="40" r="40"/></clipPath><radialGradient id="skin" cx="0.5" cy="0.45" r="0.6"><stop offset="0" stop-color="#fbe3d8"/><stop offset="1" stop-color="#eebcab"/></radialGradient></defs><circle cx="40" cy="40" r="40" fill="url(#avbg)"/><g clip-path="url(#avc)"><path d="M18 82 Q22 70 34 68 L50 68 Q62 70 66 82 Z" fill="#1d1a1b"/><path d="M34 58 L50 58 L50 70 Q42 76 34 70 Z" fill="#efc3b2"/><path d="M13 62 Q10 30 20 15 Q30 4 44 5 Q60 7 65 24 Q68 42 65 61 L55 61 L56 42 L26 45 L26 62 Z" fill="#33211d"/><ellipse cx="62.5" cy="45" rx="3.5" ry="5" fill="#f0c2b0"/><path d="M25 36 Q25 20 43 19 Q60 20 60 38 Q60 55 50 62 Q43 67 36 62 Q25 55 25 36 Z" fill="url(#skin)"/><path d="M23 44 Q20 12 44 10 Q60 11 62 36 Q58 24 48 20 Q36 22 29 30 Q26 36 26 46 Z" fill="#3a2520"/><path d="M28.5 35.5 Q32 33.5 36 35" stroke="#4a2e28" stroke-width="1.4" fill="none"/><path d="M48 35 Q52 33.5 55.5 35.5" stroke="#4a2e28" stroke-width="1.4" fill="none"/><ellipse cx="32.5" cy="41.5" rx="3.6" ry="3.2" fill="#2a1c1a"/><ellipse cx="52" cy="41.5" rx="3.6" ry="3.2" fill="#2a1c1a"/><circle cx="33.5" cy="40.5" r="0.9" fill="#fff"/><circle cx="53" cy="40.5" r="0.9" fill="#fff"/><path d="M39 55 Q42.5 57.5 46 55 Q42.5 53.5 39 55 Z" fill="#e2837c"/><path d="M42 44 Q41.5 48 43 49" stroke="#d9a898" stroke-width="1" fill="none"/></g></svg>
<div class="abs" style="left:2px;top:770px;width:2056px;height:123px;background:#fafafa"></div><div class="abs" style="left:2px;top:893px;width:2056px;height:98px;background:#ffffff"></div><div class="abs" style="left:2px;top:991px;width:2056px;height:98px;background:#fafafa"></div><div class="abs" style="left:2px;top:1089px;width:2056px;height:98px;background:#ffffff"></div><div class="abs" style="left:2px;top:1187px;width:2056px;height:43px;background:#fafafa"></div><div class="abs" style="left:2px;top:770px;width:2056px;height:2px;background:#efefef"></div><div class="abs" style="left:2px;top:892px;width:2056px;height:2px;background:#efefef"></div><div class="abs" style="left:2px;top:990px;width:2056px;height:2px;background:#efefef"></div><div class="abs" style="left:2px;top:1088px;width:2056px;height:2px;background:#efefef"></div><div class="abs" style="left:2px;top:1186px;width:2056px;height:2px;background:#efefef"></div><div class="abs" style="left:207px;top:770px;width:2px;height:460px;background:#efefef"></div><div class="abs" style="left:486px;top:770px;width:2px;height:460px;background:#efefef"></div><div class="abs" style="left:717px;top:770px;width:2px;height:460px;background:#efefef"></div><div class="abs" style="left:902px;top:770px;width:2px;height:460px;background:#efefef"></div><div class="abs" style="left:1064px;top:770px;width:2px;height:460px;background:#efefef"></div><div class="abs" style="left:1225px;top:770px;width:2px;height:460px;background:#efefef"></div><div class="abs" style="left:1387px;top:770px;width:2px;height:460px;background:#efefef"></div><div class="abs" style="left:1549px;top:770px;width:2px;height:460px;background:#efefef"></div><div class="abs" style="left:1780px;top:770px;width:2px;height:460px;background:#efefef"></div><div class="abs" style="left:1px;top:770px;width:2px;height:460px;background:#efefef"></div><div class="abs" style="left:2057px;top:770px;width:2px;height:460px;background:#efefef"></div>
<div class="abs" style="left:18px;top:810.0px;height:50px;line-height:50px;font-size:28px;color:#262626;font-weight:500;white-space:nowrap;">表名称</div>
<div class="abs" style="left:226px;top:810.0px;height:50px;line-height:50px;font-size:28px;color:#262626;font-weight:500;white-space:nowrap;">绑定房间</div>
<div class="abs" style="left:504px;top:787.5px;height:50px;line-height:50px;font-size:28px;color:#262626;font-weight:500;white-space:nowrap;">最近心跳时</div><div class="abs" style="left:504px;top:831.5px;height:50px;line-height:50px;font-size:28px;color:#262626;font-weight:500;white-space:nowrap;">间</div>
<div class="abs" style="left:735px;top:810.0px;height:50px;line-height:50px;font-size:28px;color:#262626;font-weight:500;white-space:nowrap;">付费类型</div>
<div class="abs" style="left:921px;top:810.0px;height:50px;line-height:50px;font-size:28px;color:#262626;font-weight:500;white-space:nowrap;">当前读数</div>
<div class="abs" style="left:1082px;top:787.5px;height:50px;line-height:50px;font-size:28px;color:#262626;font-weight:500;white-space:nowrap;">剩余水</div><div class="abs" style="left:1082px;top:831.5px;height:50px;line-height:50px;font-size:28px;color:#262626;font-weight:500;white-space:nowrap;">量</div>
<div class="abs" style="left:1243px;top:787.5px;height:50px;line-height:50px;font-size:28px;color:#262626;font-weight:500;white-space:nowrap;">通信状</div><div class="abs" style="left:1243px;top:831.5px;height:50px;line-height:50px;font-size:28px;color:#262626;font-weight:500;white-space:nowrap;">态</div>
<div class="abs" style="left:1405px;top:787.5px;height:50px;line-height:50px;font-size:28px;color:#262626;font-weight:500;white-space:nowrap;">运行状</div><div class="abs" style="left:1405px;top:831.5px;height:50px;line-height:50px;font-size:28px;color:#262626;font-weight:500;white-space:nowrap;">态</div>
<div class="abs" style="left:1567px;top:810.0px;height:50px;line-height:50px;font-size:28px;color:#262626;font-weight:500;white-space:nowrap;">序列号</div>
<div class="abs" style="left:1781px;top:810px;width:277px;height:50px;line-height:50px;text-align:center;font-size:28px;font-weight:500;color:#262626">操作</div>
<svg class="abs" style="left:170px;top:822px;" width="21" height="21" viewBox="0 0 21 21"><circle cx="8.5" cy="8.5" r="7" fill="none" stroke="#bfbfbf" stroke-width="2.2"/><path d="M13.5 13.5 L20 20" stroke="#bfbfbf" stroke-width="2.6"/></svg>
<svg class="abs" style="left:448px;top:822px;" width="21" height="21" viewBox="0 0 21 21"><circle cx="8.5" cy="8.5" r="7" fill="none" stroke="#bfbfbf" stroke-width="2.2"/><path d="M13.5 13.5 L20 20" stroke="#bfbfbf" stroke-width="2.6"/></svg>
<svg class="abs" style="left:1742px;top:822px;" width="21" height="21" viewBox="0 0 21 21"><circle cx="8.5" cy="8.5" r="7" fill="none" stroke="#bfbfbf" stroke-width="2.2"/><path d="M13.5 13.5 L20 20" stroke="#bfbfbf" stroke-width="2.6"/></svg>
<svg class="abs" style="left:682px;top:820px;" width="16" height="25" viewBox="0 0 16 25"><path d="M8 0 L16 10 L0 10 Z M0 15 L16 15 L8 25 Z" fill="#bfbfbf"/></svg>
<svg class="abs" style="left:1190px;top:820px;" width="16" height="25" viewBox="0 0 16 25"><path d="M8 0 L16 10 L0 10 Z M0 15 L16 15 L8 25 Z" fill="#bfbfbf"/></svg>
<svg class="abs" style="left:1348px;top:823px;" width="22" height="19" viewBox="0 0 22 19"><path d="M0 0 L22 0 L15 11 L7 11 Z M7.5 13 L14.5 13 L14.5 19 L7.5 19 Z" fill="#bfbfbf"/></svg>
<svg class="abs" style="left:1510px;top:823px;" width="22" height="19" viewBox="0 0 22 19"><path d="M0 0 L22 0 L15 11 L7 11 Z M7.5 13 L14.5 13 L14.5 19 L7.5 19 Z" fill="#bfbfbf"/></svg>
<div class="abs" style="left:18px;top:919.0px;height:50px;line-height:50px;font-size:24px;color:#1890ff;font-weight:normal;white-space:nowrap;">104</div>
<div class="abs" style="left:226px;top:919.0px;height:50px;line-height:50px;font-size:24px;color:#262626;font-weight:normal;white-space:nowrap;">锦昶（广东）食品科...</div>
<div class="abs" style="left:504px;top:919.0px;height:50px;line-height:50px;font-size:24px;color:#262626;font-weight:normal;white-space:nowrap;">-</div>
<div class="abs" style="left:735px;top:919.0px;height:50px;line-height:50px;font-size:24px;color:#262626;font-weight:normal;white-space:nowrap;">预付费</div>
<div class="abs" style="left:920px;top:919.0px;height:50px;line-height:50px;font-size:24px;color:#262626;font-weight:bold;white-space:nowrap;">0</div>
<div class="abs" style="left:1081px;top:919.0px;height:50px;line-height:50px;font-size:24px;color:#262626;font-weight:normal;white-space:nowrap;">0</div>
<div class="abs" style="left:1243px;top:938.0px;width:12px;height:12px;border-radius:6px;background:#d9d9d9"></div>
<div class="abs" style="left:1273px;top:919.0px;height:50px;line-height:50px;font-size:24px;color:#262626;font-weight:normal;white-space:nowrap;">离线</div>
<div class="abs" style="left:1405px;top:938.0px;width:12px;height:12px;border-radius:6px;background:#52c41a"></div>
<div class="abs" style="left:1434px;top:919.0px;height:50px;line-height:50px;font-size:24px;color:#262626;font-weight:normal;white-space:nowrap;">正常</div>
<div class="abs" style="left:1568px;top:919.0px;height:50px;line-height:50px;font-size:24px;color:#262626;font-weight:normal;white-space:nowrap;">104</div>
<div class="abs" style="left:1616px;top:920.5px;width:79px;height:43px;background:#fafafa;border:2px solid #d9d9d9;border-radius:5px;font-size:24px;line-height:39px;text-align:center;color:#262626">类型</div>
<div class="abs" style="left:1841px;top:919.0px;height:50px;line-height:50px;font-size:24px;color:#1890ff;font-weight:normal;white-space:nowrap;">编辑</div>
<div class="abs" style="left:1942px;top:919.0px;height:50px;line-height:50px;font-size:24px;color:#ff4d4f;font-weight:normal;white-space:nowrap;">删除</div>
<div class="abs" style="left:18px;top:1017.0px;height:50px;line-height:50px;font-size:24px;color:#1890ff;font-weight:normal;white-space:nowrap;">103</div>
<div class="abs" style="left:226px;top:1017.0px;height:50px;line-height:50px;font-size:24px;color:#262626;font-weight:normal;white-space:nowrap;">新河城/新河城1栋3...</div>
<div class="abs" style="left:504px;top:1017.0px;height:50px;line-height:50px;font-size:24px;color:#262626;font-weight:normal;white-space:nowrap;">-</div>
<div class="abs" style="left:735px;top:1017.0px;height:50px;line-height:50px;font-size:24px;color:#262626;font-weight:normal;white-space:nowrap;">预付费</div>
<div class="abs" style="left:920px;top:1017.0px;height:50px;line-height:50px;font-size:24px;color:#262626;font-weight:bold;white-space:nowrap;">0</div>
<div class="abs" style="left:1081px;top:1017.0px;height:50px;line-height:50px;font-size:24px;color:#262626;font-weight:normal;white-space:nowrap;">0</div>
<div class="abs" style="left:1243px;top:1036.0px;width:12px;height:12px;border-radius:6px;background:#d9d9d9"></div>
<div class="abs" style="left:1273px;top:1017.0px;height:50px;line-height:50px;font-size:24px;color:#262626;font-weight:normal;white-space:nowrap;">离线</div>
<div class="abs" style="left:1405px;top:1036.0px;width:12px;height:12px;border-radius:6px;background:#52c41a"></div>
<div class="abs" style="left:1434px;top:1017.0px;height:50px;line-height:50px;font-size:24px;color:#262626;font-weight:normal;white-space:nowrap;">正常</div>
<div class="abs" style="left:1568px;top:1017.0px;height:50px;line-height:50px;font-size:24px;color:#262626;font-weight:normal;white-space:nowrap;">103</div>
<div class="abs" style="left:1616px;top:1018.5px;width:79px;height:43px;background:#fafafa;border:2px solid #d9d9d9;border-radius:5px;font-size:24px;line-height:39px;text-align:center;color:#262626">类型</div>
<div class="abs" style="left:1841px;top:1017.0px;height:50px;line-height:50px;font-size:24px;color:#1890ff;font-weight:normal;white-space:nowrap;">编辑</div>
<div class="abs" style="left:1942px;top:1017.0px;height:50px;line-height:50px;font-size:24px;color:#ff4d4f;font-weight:normal;white-space:nowrap;">删除</div>
<div class="abs" style="left:18px;top:1115.0px;height:50px;line-height:50px;font-size:24px;color:#1890ff;font-weight:normal;white-space:nowrap;">地方</div>
<div class="abs" style="left:226px;top:1115.0px;height:50px;line-height:50px;font-size:24px;color:#262626;font-weight:normal;white-space:nowrap;">赣榆城头高级中学/福...</div>
<div class="abs" style="left:504px;top:1115.0px;height:50px;line-height:50px;font-size:24px;color:#262626;font-weight:normal;white-space:nowrap;">-</div>
<div class="abs" style="left:735px;top:1115.0px;height:50px;line-height:50px;font-size:24px;color:#262626;font-weight:normal;white-space:nowrap;">预付费</div>
<div class="abs" style="left:920px;top:1115.0px;height:50px;line-height:50px;font-size:24px;color:#262626;font-weight:bold;white-space:nowrap;">0</div>
<div class="abs" style="left:1081px;top:1115.0px;height:50px;line-height:50px;font-size:24px;color:#262626;font-weight:normal;white-space:nowrap;">0</div>
<div class="abs" style="left:1243px;top:1134.0px;width:12px;height:12px;border-radius:6px;background:#d9d9d9"></div>
<div class="abs" style="left:1273px;top:1115.0px;height:50px;line-height:50px;font-size:24px;color:#262626;font-weight:normal;white-space:nowrap;">离线</div>
<div class="abs" style="left:1405px;top:1134.0px;width:12px;height:12px;border-radius:6px;background:#52c41a"></div>
<div class="abs" style="left:1434px;top:1115.0px;height:50px;line-height:50px;font-size:24px;color:#262626;font-weight:normal;white-space:nowrap;">正常</div>
<div class="abs" style="left:1568px;top:1115.0px;height:50px;line-height:50px;font-size:24px;color:#262626;font-weight:normal;white-space:nowrap;">123456</div>
<div class="abs" style="left:1655px;top:1116.5px;width:79px;height:43px;background:#fafafa;border:2px solid #d9d9d9;border-radius:5px;font-size:24px;line-height:39px;text-align:center;color:#262626">类型</div>
<div class="abs" style="left:1841px;top:1115.0px;height:50px;line-height:50px;font-size:24px;color:#1890ff;font-weight:normal;white-space:nowrap;">编辑</div>
<div class="abs" style="left:1942px;top:1115.0px;height:50px;line-height:50px;font-size:24px;color:#ff4d4f;font-weight:normal;white-space:nowrap;">删除</div>
<div class="abs" style="left:1550px;top:1187px;width:300px;height:43px;overflow:hidden"><div class="abs" style="left:18px;top:14.0px;height:50px;line-height:50px;font-size:24px;color:#262626;font-weight:normal;white-space:nowrap;">21312234</div></div>
</div>
</body>
</html>
